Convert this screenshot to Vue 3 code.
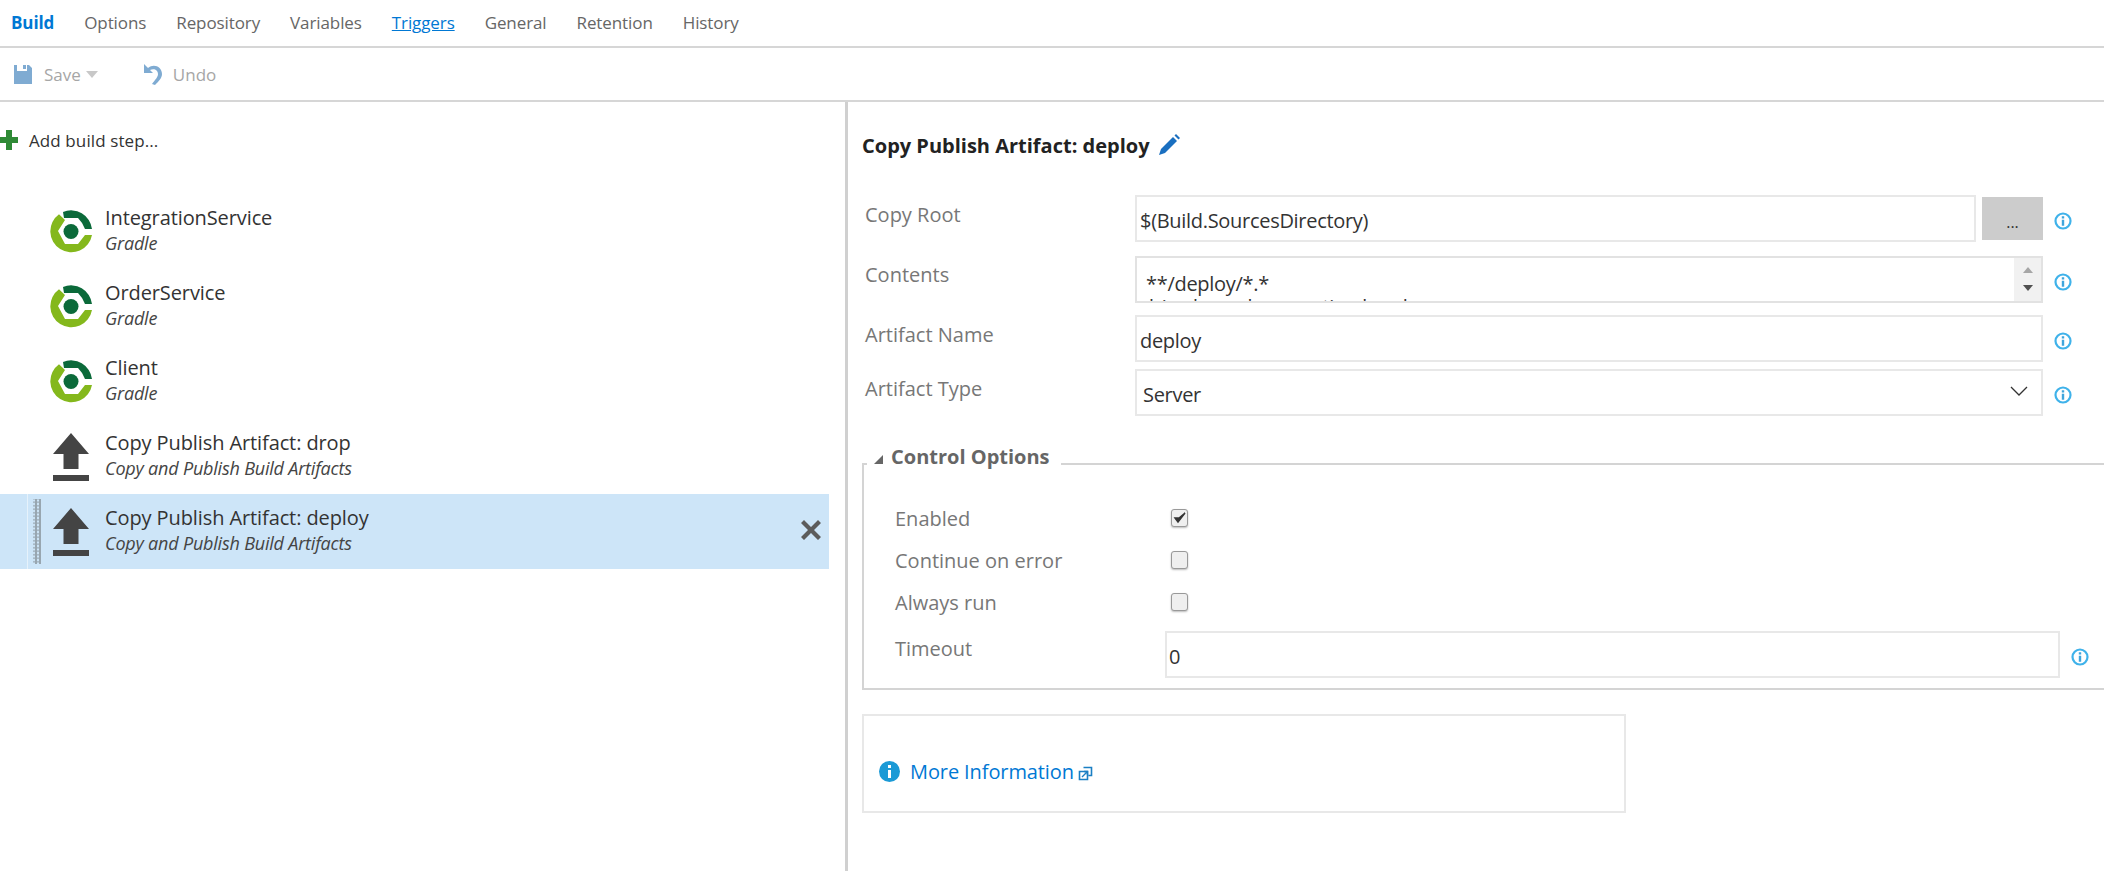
<template>
  <div class="page">
    <div class="tabs">
      <a
        v-for="tab in tabs"
        :key="tab"
        class="tab"
        :class="{ active: tab === 'Build', link: tab === 'Triggers' }"
      >{{ tab }}</a>
    </div>

    <div class="toolbar">
      <div class="tool">
        <svg class="save-icon" viewBox="0 0 18 19">
          <path d="M0 0h3v6h10V0h2l3 3v16H0z" fill="#7fabd2" />
          <path d="M9 0h3v4H9z" fill="#7fabd2" />
        </svg>
        <span>Save</span>
        <i class="caret"></i>
      </div>
      <div class="tool undo">
        <svg class="undo-icon" viewBox="0 0 20 22">
          <path d="M1 1v9h9L7 7c4-2 8 0 8 4 0 3-3 6-6 10l3 1c4-4 7-7 7-11C19 4 11 0 5 5z" fill="#7fabd2" />
        </svg>
        <span>Undo</span>
      </div>
    </div>

    <div class="main">
      <div class="left">
        <div class="add-step">
          <svg class="plus" viewBox="0 0 18 20">
            <path d="M6 0h6v7h6v6h-6v7H6v-7H0V7h6z" fill="#2f8a36" />
          </svg>
          <span>Add build step...</span>
        </div>

        <div class="steps">
          <div
            v-for="step in steps"
            :key="step.name"
            class="step"
            :class="{ selected: step.selected }"
          >
            <div v-if="step.selected" class="gripper"></div>
            <svg v-if="step.kind === 'gradle'" class="step-icon" viewBox="0 0 42 43">
              <path d="M13 2A21 21 0 0 1 42 19H35Q33 13 28 8H14z" fill="#0b6a3a" />
              <path d="M9 4.300A21 21 0 1 0 42 25H35L28 34H15L8 21L15 10z" fill="#84b81c" />
              <circle cx="21" cy="21.500" r="7.500" fill="#0b6a3a" />
            </svg>
            <svg v-else class="step-icon upload" viewBox="0 0 36 48">
              <path d="M18 0L36 21H25.500V36H10.500V21H0z" fill="#444" />
              <path d="M0 42h36v6H0z" fill="#444" />
            </svg>
            <div class="step-text">
              <div class="step-name">{{ step.name }}</div>
              <div class="step-type">{{ step.type }}</div>
            </div>
            <svg v-if="step.selected" class="remove" viewBox="0 0 20 20">
              <path d="M3 0L10 7L17 0L20 3L13 10L20 17L17 20L10 13L3 20L0 17L7 10L0 3z" fill="#5c5c5c" />
            </svg>
          </div>
        </div>
      </div>

      <div class="right">
        <div class="title">
          <span>Copy Publish Artifact: deploy</span>
          <svg class="pencil" viewBox="0 0 22 22">
            <path d="M15 3l4 4L7 19l-6 2 2-6z" fill="#1a6fc0" />
            <path d="M16.500 1.500l1.500-1.500 4 4-1.500 1.500z" fill="#1a6fc0" />
          </svg>
        </div>

        <div class="fields">
          <div class="field f-root">
            <label>Copy Root</label>
            <div class="control-wrap">
              <div class="input">$(Build.SourcesDirectory)</div>
              <div class="browse">...</div>
            </div>
            <svg class="info" viewBox="0 0 18 18"><use href="#info-outline" /></svg>
          </div>
          <div class="field f-contents">
            <label>Contents</label>
            <div class="input area">
              <div class="area-text">**/deploy/*.*<br />*.jar;*.war;*.properties;*.yml</div>
              <div class="scroll">
                <i class="up"></i>
                <i class="down"></i>
              </div>
            </div>
            <svg class="info" viewBox="0 0 18 18"><use href="#info-outline" /></svg>
          </div>
          <div class="field f-name">
            <label>Artifact Name</label>
            <div class="input">deploy</div>
            <svg class="info" viewBox="0 0 18 18"><use href="#info-outline" /></svg>
          </div>
          <div class="field f-type">
            <label>Artifact Type</label>
            <div class="input select">
              <span>Server</span>
              <svg class="chevron" viewBox="0 0 18 10">
                <path d="M1 1l8 8 8-8" fill="none" stroke="#333" stroke-width="1.300" />
              </svg>
            </div>
            <svg class="info" viewBox="0 0 18 18"><use href="#info-outline" /></svg>
          </div>
        </div>

        <fieldset class="options">
          <legend><i class="corner"></i>Control Options</legend>
          <div v-for="opt in options" :key="opt.label" class="check-row">
            <span class="check-label">{{ opt.label }}</span>
            <span class="checkbox">
              <svg v-if="opt.on" viewBox="0 0 14 14">
                <path d="M2 7l3 4 7-9-6 5z" fill="#333" stroke="#333" stroke-width="1.400" />
              </svg>
            </span>
          </div>
          <div class="timeout-row">
            <span class="check-label">Timeout</span>
            <div class="input timeout">0</div>
            <svg class="info" viewBox="0 0 18 18"><use href="#info-outline" /></svg>
          </div>
        </fieldset>

        <div class="more">
          <svg class="more-info" viewBox="0 0 21 21">
            <circle cx="10.500" cy="10.500" r="10.500" fill="#1b9ad6" />
            <path d="M9 4h3v3H9zM9 9h3v8H9z" fill="#fff" />
          </svg>
          <a class="more-link">More Information</a>
          <svg class="external" viewBox="0 0 15 15">
            <path d="M5.500 1.500h8v8h-3M9.500 5.500h-8v8h8z" fill="none" stroke="#1b7fc4" stroke-width="1.600" />
            <path d="M4 11l5-5M6 5.500h3.500V9" fill="none" stroke="#1b7fc4" stroke-width="1.400" />
          </svg>
        </div>
      </div>
    </div>

    <svg class="defs" width="0" height="0">
      <symbol id="info-outline" viewBox="0 0 18 18">
        <circle cx="9" cy="9" r="7.500" fill="none" stroke="#3fb2ea" stroke-width="2.200" />
        <path d="M7.800 4.200h2.400v2.200H7.800zM7.800 7.800h2.400v6H7.800z" fill="#3fa5dc" />
      </symbol>
    </svg>
  </div>
</template>

<script setup>
const tabs = ['Build', 'Options', 'Repository', 'Variables', 'Triggers', 'General', 'Retention', 'History']

const steps = [
  { name: 'IntegrationService', type: 'Gradle', kind: 'gradle' },
  { name: 'OrderService', type: 'Gradle', kind: 'gradle' },
  { name: 'Client', type: 'Gradle', kind: 'gradle' },
  { name: 'Copy Publish Artifact: drop', type: 'Copy and Publish Build Artifacts', kind: 'upload' },
  { name: 'Copy Publish Artifact: deploy', type: 'Copy and Publish Build Artifacts', kind: 'upload', selected: true }
]

const options = [
  { label: 'Enabled', on: true },
  { label: 'Continue on error', on: false },
  { label: 'Always run', on: false }
]
</script>

<style>
html,
body {
  margin: 0;
  background: #fff;
  overflow: hidden;
}
</style>

<style scoped>
.page {
  height: 871px;
  display: flex;
  flex-direction: column;
  font-family: "Open Sans", "Noto Sans", sans-serif;
  font-size: 20px;
  color: #333;
  overflow: hidden;
}

.tabs {
  height: 44px;
  padding-bottom: 2px;
  border-bottom: 2px solid #d6d6d6;
  display: flex;
  align-items: center;
  gap: 30px;
  padding-left: 11px;
  font-size: 17px;
  letter-spacing: -0.1px;
  color: #666;
}

.tab.active {
  color: #0078d4;
  font-weight: 700;
}

.tab.link {
  color: #0078d4;
  text-decoration: underline;
}

.toolbar {
  height: 52px;
  border-bottom: 2px solid #d6d6d6;
  display: flex;
  align-items: center;
  padding-left: 14px;
  font-size: 17px;
  color: #a6a6a6;
}

.tool {
  display: flex;
  align-items: center;
}

.save-icon {
  width: 18px;
  height: 19px;
  margin-right: 12px;
}

.caret {
  border: 6px solid transparent;
  border-top: 7px solid #c8c8c8;
  border-bottom: 0;
  margin-left: 5px;
}

.undo {
  margin-left: 45px;
}

.undo-icon {
  width: 20px;
  height: 22px;
  margin-right: 10px;
}

.main {
  flex: 1;
  display: flex;
  min-height: 0;
}

.left {
  flex: none;
  border-right: 3px solid #d0d0d0;
  padding-right: 16px;
  box-sizing: border-box;
  width: 848px;
}

.add-step {
  display: flex;
  align-items: center;
  gap: 11px;
  margin-top: 28px;
  font-size: 17px;
  letter-spacing: 0.1px;
  height: 20px;
}

.plus {
  width: 18px;
  height: 20px;
}

.steps {
  margin-top: 44px;
}

.step {
  position: relative;
  height: 75px;
  display: flex;
  align-items: center;
  padding-left: 50px;
  box-sizing: border-box;
}

.step.selected {
  background: #cde5f8;
}

.gripper {
  position: absolute;
  left: 27px;
  top: 0;
  bottom: 0;
  width: 15px;
  border-left: 1px solid #e6f2fb;
  box-sizing: border-box;
  background-image: radial-gradient(circle, #98a6b0 1.500px, transparent 1.700px);
  background-size: 4px 3.500px;
  background-position: 5px 5px;
  background-repeat: repeat;
  background-origin: content-box;
  background-clip: content-box;
  padding: 5px 1px 5px 5px;
}

.step-icon {
  width: 42px;
  height: 43px;
  flex: none;
}

.step-icon.upload {
  width: 36px;
  height: 48px;
  margin: 0 3px;
}

.step-text {
  margin-left: 13px;
  padding-bottom: 4px;
}

.step-name {
  font-size: 20px;
  line-height: 26px;
  letter-spacing: -0.1px;
  color: #333;
}

.step-type {
  font-size: 18px;
  line-height: 24px;
  font-style: italic;
  letter-spacing: -0.2px;
  color: #444;
}

.remove {
  position: absolute;
  right: 8px;
  top: 26px;
  width: 20px;
  height: 20px;
}

.right {
  flex: 1;
  min-width: 0;
  padding-left: 14px;
}

.title {
  display: flex;
  align-items: center;
  gap: 8px;
  margin-top: 30px;
  height: 26px;
  font-size: 20px;
  font-weight: 700;
  color: #222;
}

.pencil {
  width: 22px;
  height: 22px;
}

.fields {
  margin-top: 37px;
}

.field {
  display: flex;
  align-items: flex-start;
  padding-left: 3px;
}

.field label {
  width: 270px;
  flex: none;
  font-size: 20px;
  line-height: 26px;
  padding-top: 7px;
  color: #777;
}

.f-contents {
  margin-top: 14px;
}

.f-contents label {
  padding-top: 6px;
}

.f-name {
  margin-top: 12px;
}

.f-type {
  margin-top: 7px;
}

.input {
  height: 47px;
  box-sizing: border-box;
  flex: 1;
  min-width: 0;
  border: 2px solid #e8e8e8;
  display: flex;
  align-items: center;
  padding-left: 3px;
  padding-top: 4px;
  font-size: 20px;
  letter-spacing: -0.3px;
  color: #333;
}

.control-wrap {
  flex: 1;
  min-width: 0;
  display: flex;
  align-items: center;
  gap: 6px;
}

.browse {
  width: 61px;
  height: 43px;
  flex: none;
  background: #cccccc;
  display: flex;
  align-items: center;
  justify-content: center;
  padding-top: 6px;
  box-sizing: border-box;
  font-size: 16px;
  color: #333;
}

.area {
  padding: 0;
  align-items: stretch;
  overflow: hidden;
  border-color: #e2e2e2;
}

.area-text {
  flex: 1;
  padding: 14px 0 0 9px;
  line-height: 23px;
  overflow: hidden;
}

.scroll {
  width: 27px;
  background: #f1f1f1;
  display: flex;
  flex-direction: column;
  align-items: center;
  justify-content: space-between;
  padding: 9px 0 10px;
  box-sizing: border-box;
}

.scroll i {
  border-left: 5px solid transparent;
  border-right: 5px solid transparent;
}

.scroll .up {
  border-bottom: 6px solid #a6a6a6;
}

.scroll .down {
  border-top: 6px solid #505050;
}

.select {
  justify-content: space-between;
  padding-left: 6px;
}

.chevron {
  width: 18px;
  height: 10px;
  margin: 0 13px 8px 0;
}

.info {
  width: 18px;
  height: 18px;
  flex: none;
  margin: 17px 32px 0 11px;
}

.options {
  margin: 27px -10px 0 0;
  padding: 13px 0 10px 31px;
  border: 0;
  border-top: 2px solid #d4d4d4;
  border-left: 2px solid #d4d4d4;
  border-bottom: 2px solid #d4d4d4;
  min-width: 0;
}

.options legend {
  margin-left: -28px;
  padding: 0 11px 14px 7px;
  font-size: 20px;
  font-weight: 700;
  color: #666;
  display: flex;
  align-items: center;
}

.corner {
  width: 0;
  height: 0;
  border-left: 9px solid transparent;
  border-bottom: 9px solid #666;
  margin-right: 8px;
  margin-top: 6px;
}

.check-row {
  height: 42px;
  display: flex;
  align-items: center;
}

.check-label {
  width: 276px;
  flex: none;
  font-size: 20px;
  color: #777;
}

.checkbox {
  width: 17px;
  height: 18px;
  box-sizing: border-box;
  border: 1px solid #999;
  border-radius: 3px;
  background: #efefef;
  box-shadow: 0 1px 2px #bbb;
  display: flex;
  align-items: center;
  justify-content: center;
}

.checkbox svg {
  width: 14px;
  height: 14px;
}

.timeout-row {
  display: flex;
  align-items: flex-start;
  margin-top: 8px;
}

.timeout-row .check-label {
  width: 270px;
  padding-top: 4px;
}

.timeout {
  padding-left: 2px;
}

.timeout-row .info {
  margin: 17px 25px 0 11px;
}

.more {
  margin-top: 24px;
  width: 764px;
  height: 99px;
  box-sizing: border-box;
  border: 2px solid #e8e8e8;
  display: flex;
  align-items: center;
  padding: 16px 0 0 15px;
}

.more-info {
  width: 21px;
  height: 21px;
  margin-right: 10px;
}

.more-link {
  font-size: 20px;
  letter-spacing: -0.1px;
  color: #0078d4;
}

.external {
  width: 15px;
  height: 15px;
  margin: 4px 0 0 4px;
}

.defs {
  position: absolute;
}
</style>
